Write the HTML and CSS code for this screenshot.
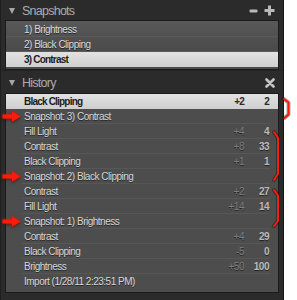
FILE: index.html
```html
<!DOCTYPE html>
<html>
<head>
<meta charset="utf-8">
<link rel="stylesheet" href="styles.css">
</head>
<body>
<div class="panel">
  <div class="section-head">
    <span class="tri"></span>
    <span class="title">Snapshots</span>
    <span class="head-icons">
      <svg class="icon" width="10" height="10" viewBox="0 0 10 10"><rect x="0.5" y="3.5" width="8" height="3" rx="1" fill="#b9b9b9"/></svg>
      <svg class="icon" width="11" height="11" viewBox="0 0 11 11"><path d="M4 0.5h3v3.5h3.5v3H7v3.5H4V7H0.5V4H4z" fill="#b9b9b9"/></svg>
    </span>
  </div>
  <div class="list snap-list">
    <div class="srow">1) Brightness</div>
    <div class="srow">2) Black Clipping</div>
    <div class="srow selected">3) Contrast</div>
  </div>

  <div class="section-head history-head">
    <span class="tri"></span>
    <span class="title">History</span>
    <span class="head-icons">
      <svg class="icon" width="10" height="10" viewBox="0 0 10 10"><path d="M1.5 1.5l7 7M8.5 1.5l-7 7" stroke="#c4c4c4" stroke-width="2.6" stroke-linecap="round"/></svg>
    </span>
  </div>
  <div class="list history-list">
    <div class="hrow selected"><span class="name">Black Clipping</span><span class="delta">+2</span><span class="val">2</span></div>
    <div class="hrow snap"><svg class="arrow" width="21" height="13" viewBox="0 0 21 13"><path d="M1.5 4.5H11V1.2L19.5 6.5L11 11.8V8.5H1.5Z" fill="#ff1a0a"/></svg><span class="name">Snapshot: 3) Contrast</span><span class="delta"></span><span class="val"></span></div>
    <div class="hrow"><span class="name">Fill Light</span><span class="delta">+4</span><span class="val">4</span></div>
    <div class="hrow"><span class="name">Contrast</span><span class="delta">+8</span><span class="val">33</span></div>
    <div class="hrow"><span class="name">Black Clipping</span><span class="delta">+1</span><span class="val">1</span></div>
    <div class="hrow snap"><svg class="arrow" width="21" height="13" viewBox="0 0 21 13"><path d="M1.5 4.5H11V1.2L19.5 6.5L11 11.8V8.5H1.5Z" fill="#ff1a0a"/></svg><span class="name">Snapshot: 2) Black Clipping</span><span class="delta"></span><span class="val"></span></div>
    <div class="hrow"><span class="name">Contrast</span><span class="delta">+2</span><span class="val">27</span></div>
    <div class="hrow"><span class="name">Fill Light</span><span class="delta">+14</span><span class="val">14</span></div>
    <div class="hrow snap"><svg class="arrow" width="21" height="13" viewBox="0 0 21 13"><path d="M1.5 4.5H11V1.2L19.5 6.5L11 11.8V8.5H1.5Z" fill="#ff1a0a"/></svg><span class="name">Snapshot: 1) Brightness</span><span class="delta"></span><span class="val"></span></div>
    <div class="hrow"><span class="name">Contrast</span><span class="delta">+4</span><span class="val">29</span></div>
    <div class="hrow"><span class="name">Black Clipping</span><span class="delta">-5</span><span class="val">0</span></div>
    <div class="hrow"><span class="name">Brightness</span><span class="delta">+50</span><span class="val">100</span></div>
    <div class="hrow last"><span class="name">Import (1/28/11 2:23:51 PM)</span><span class="delta"></span><span class="val"></span></div>
  </div>

  <svg class="brackets" width="297" height="300" viewBox="0 0 297 300">
    <g fill="none" stroke-linejoin="round" stroke-linecap="round">
      <g stroke="rgba(0,0,0,0.35)" stroke-width="4">
        <polyline points="284,99 288.5,102.5 288.5,114.5 284.5,118"/>
        <polyline points="274,132 278,137.5 278,174 274,180"/>
        <polyline points="274,190 278,195.5 278,221 274,226"/>
      </g>
      <g stroke="#ff1a0a" stroke-width="2">
        <polyline points="284,99 288.5,102.5 288.5,114.5 284.5,118"/>
        <polyline points="274,132 278,137.5 278,174 274,180"/>
        <polyline points="274,190 278,195.5 278,221 274,226"/>
      </g>
    </g>
  </svg>
</div>
</body>
</html>
```

FILE: styles.css
```css
* { box-sizing: border-box; }
html, body { margin: 0; padding: 0; background: #ffffff; }
body { width: 297px; height: 300px; overflow: hidden; font-family: "Liberation Sans", Arial, sans-serif; }

.panel {
  position: relative;
  width: 284px;
  height: 300px;
  background: #2b2b2b;
  border-right: 1px solid #161616;
  border-left: 1px solid #1f1f1f;
}

.section-head {
  display: flex;
  align-items: center;
  height: 20px;
  padding: 1px 0 0 8px;
  color: #ababab;
}
.history-head { height: 23px; padding-top: 1px; border-top: 1px solid #232323; }

.tri {
  width: 0; height: 0;
  border-left: 3.5px solid transparent;
  border-right: 3.5px solid transparent;
  border-top: 6px solid #a6a6a6;
  margin-right: 7px;
}
.title { font-size: 12.5px; letter-spacing: -0.75px; }
.head-icons { margin-left: auto; margin-right: 8px; display: flex; align-items: center; gap: 5px; }
.icon { display: block; }

.list {
  margin: 0 4px 0 4px;
  border: 1px solid #1b1b1b;
  background: #4d4d4d;
}

.snap-list {
  padding: 1px 0 2px;
  background: linear-gradient(#585858, #4b4b4b 60%);
}
.srow {
  height: 15px;
  line-height: 15px;
  padding-left: 18px;
  font-size: 10px;
  letter-spacing: -0.5px;
  color: #dadada;
  text-shadow: 0 1px 0 rgba(0,0,0,0.5);
  background: linear-gradient(#5b5b5b, #5b5b5b) no-repeat 0 100% / 100% 1px;
}
.srow.selected {
  background: linear-gradient(#e2e2e2, #d0d0d0);
  color: #1e1e1e;
  text-shadow: none;
  font-weight: 700;
  letter-spacing: -0.8px;
}

.history-list { padding: 0 0 3px; height: 200px; }
.hrow {
  position: relative;
  display: flex;
  align-items: center;
  height: 15px;
  padding: 0 9px 0 18px;
  font-size: 10px;
  letter-spacing: -0.5px;
  color: #d8d8d8;
  text-shadow: 0 1px 0 rgba(0,0,0,0.5);
  background: linear-gradient(#575757, #575757) no-repeat 16px 100% / calc(100% - 24px) 1px;
}
.hrow.last { background: none; }
.hrow.selected {
  background: linear-gradient(#e1e1e1, #cfcfcf);
  color: #1c1c1c;
  text-shadow: none;
  font-weight: 700;
  letter-spacing: -0.8px;
}
.name { flex: 1; white-space: nowrap; }
.delta { width: 30px; text-align: right; color: #7e7e7e; }
.val { width: 25px; text-align: right; color: #bababa; font-weight: 700; }
.hrow.selected .delta, .hrow.selected .val { color: #2a2a2a; }

.arrow {
  position: absolute;
  left: -5px;
  top: 1px;
  filter: drop-shadow(0 0 1.5px rgba(255,40,0,0.7)) drop-shadow(0 1px 1px rgba(0,0,0,0.6));
}

.brackets {
  position: absolute;
  left: -1px;
  top: 0;
  pointer-events: none;
}
```
